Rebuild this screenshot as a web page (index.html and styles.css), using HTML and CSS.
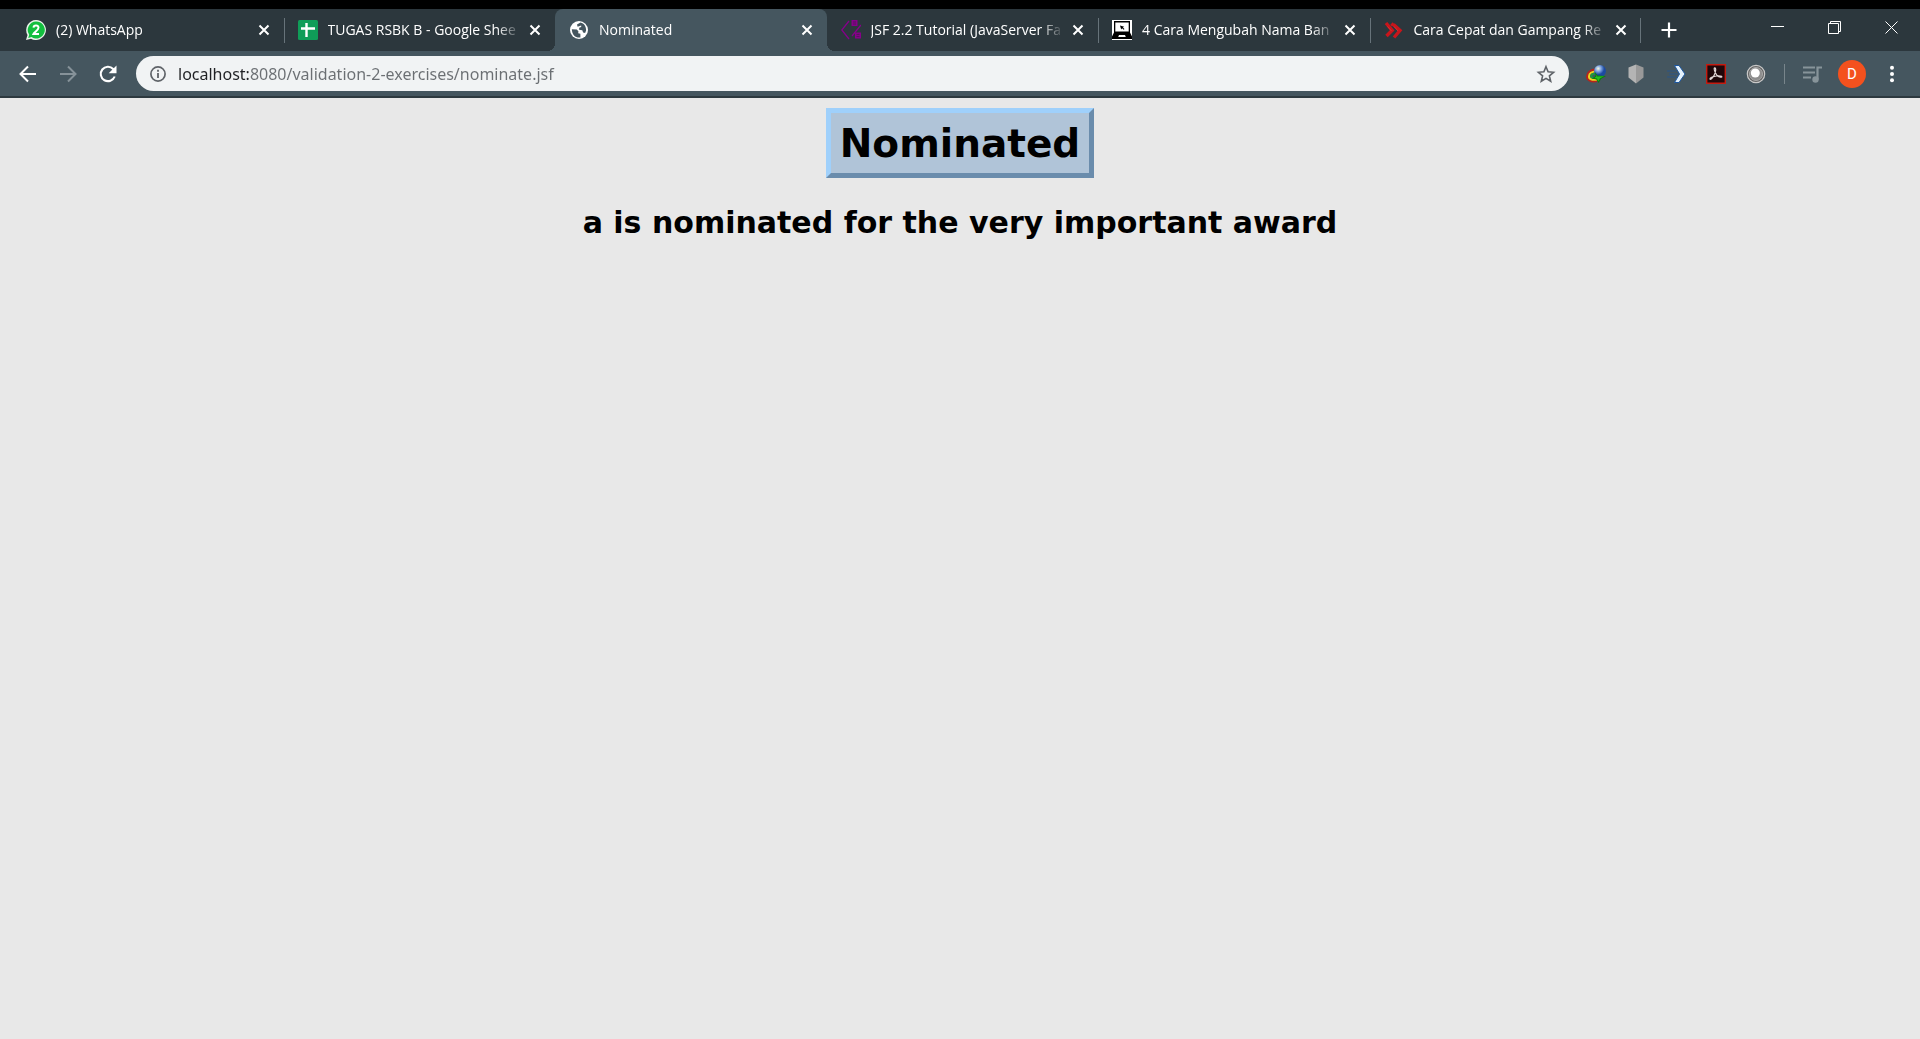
FILE: index.html
```html
<!DOCTYPE html>
<html lang="en">
<head>
<meta charset="utf-8">
<title>Nominated</title>
<link rel="stylesheet" href="styles.css">
</head>
<body>
<header class="browser">
  <div class="titlebar">
    <nav class="tabs" aria-label="Open tabs">
      <div class="tab">
        <svg class="favicon" viewBox="0 0 20 20"><path d="M10 0a10 10 0 1 1-5 18.700L0 20l1.500-5A10 10 0 0 1 10 0z" fill="#e9f3ea"/><path d="M10 1.500A8.500 8.500 0 1 1 5.500 17L2.200 18l1-3.200A8.500 8.500 0 0 1 10 1.500z" fill="#12bf3e"/><path d="M7.500 7.600c.2-3 5.200-2.900 5 .2C12.400 10 8.500 12 7.500 14H13" fill="none" stroke="#fff" stroke-width="2"/></svg>
        <a class="tab-title" href="#">(2) WhatsApp</a>
        <button class="tab-close" aria-label="Close tab"><svg viewBox="0 0 12 12"><path d="M1.500 1.500l9 9m0-9l-9 9"/></svg></button>
      </div>
      <div class="tab tab-divided">
        <svg class="favicon" viewBox="0 0 20 20"><rect width="20" height="20" rx="1.500" fill="#0f9d58"/><path d="M3 8.500h14M8.500 3v14" stroke="#fff" stroke-width="2.400"/></svg>
        <a class="tab-title" href="#">TUGAS RSBK B - Google Shee</a>
        <button class="tab-close" aria-label="Close tab"><svg viewBox="0 0 12 12"><path d="M1.500 1.500l9 9m0-9l-9 9"/></svg></button>
      </div>
      <div class="tab tab-active">
        <svg class="favicon" viewBox="0 0 20 20"><circle cx="10" cy="10" r="9" fill="#fff"/><path d="M2.800 9.200l5 .4 1.600 1.700-.2 2 2.200.5v3.700C7 18.300 3 15 2.800 9.200zM8 4.400l3.500-1.900c3.600.8 5.800 4 5.600 8l-1 2.500-2-.6-.8-2.200-3.200-.4.1-2 2-.8V5.500L8.600 6.800z" fill="#45565f"/></svg>
        <a class="tab-title" href="#">Nominated</a>
        <button class="tab-close" aria-label="Close tab"><svg viewBox="0 0 12 12"><path d="M1.500 1.500l9 9m0-9l-9 9"/></svg></button>
      </div>
      <div class="tab">
        <svg class="favicon" viewBox="0 0 20 20"><path d="M8 1L.8 10 8 19M20 5l-9 11" fill="none" stroke="#86008a" stroke-width="1.300"/><path d="M10.500 0h6v6h-6zM14 12.500h6v6h-6z" fill="#86008a"/><path d="M12 2h3m-3 2h3M15.500 14.500h3m-3 2h3" stroke="#4c1556" stroke-width=".8"/></svg>
        <a class="tab-title" href="#">JSF 2.2 Tutorial (JavaServer Fa</a>
        <button class="tab-close" aria-label="Close tab"><svg viewBox="0 0 12 12"><path d="M1.500 1.500l9 9m0-9l-9 9"/></svg></button>
      </div>
      <div class="tab tab-divided">
        <svg class="favicon" viewBox="0 0 20 20"><path d="M0 0h20v20H0z" fill="#fff"/><path d="M2 1h16v11.500l2 4V19H0v-2.500l2-4z"/><path d="M3.300 2.500h13.400v9H3.300z" fill="#fff"/><path d="M8 5.500l4.200 1.200-1.300.8 1.600 1.500-.8.800-1.600-1.500-.9 1.200z"/><path d="M7 15h6l.8 2H6.200z" fill="#fff"/></svg>
        <a class="tab-title" href="#">4 Cara Mengubah Nama Ban</a>
        <button class="tab-close" aria-label="Close tab"><svg viewBox="0 0 12 12"><path d="M1.500 1.500l9 9m0-9l-9 9"/></svg></button>
      </div>
      <div class="tab tab-divided tab-last">
        <svg class="favicon" viewBox="0 0 20 20"><path d="M2 3l6.200 7.300L2.500 16M7.500 3.500l1.700 1.800M9.500 4.500l6.500 6-6 7" fill="none" stroke="#c9151b" stroke-width="3.400"/><path d="M3.500 6.500l4 4.500M10 6.500l4 4.500" stroke="#e23a3a" stroke-width=".7"/></svg>
        <a class="tab-title" href="#">Cara Cepat dan Gampang Re</a>
        <button class="tab-close" aria-label="Close tab"><svg viewBox="0 0 12 12"><path d="M1.500 1.500l9 9m0-9l-9 9"/></svg></button>
      </div>
    </nav>
    <button class="new-tab" aria-label="New tab"><svg class="icon" viewBox="0 0 20 20"><path d="M10 2.500v15M2.500 10h15" stroke="#fff" stroke-width="2.200"/></svg></button>
    <div class="window-controls">
      <button class="window-button" aria-label="Minimize"><svg viewBox="0 0 14 14"><path d="M0 5.500h13"/></svg></button>
      <button class="window-button" aria-label="Restore"><svg viewBox="0 0 14 14"><path d="M.5 2.500h10v10H.5zM2.500 2.500v-2h10v10h-2"/></svg></button>
      <button class="window-button" aria-label="Close"><svg viewBox="0 0 14 14"><path d="M.5.500l12 12m0-12l-12 12"/></svg></button>
    </div>
  </div>
  <div class="toolbar">
    <button class="tool" aria-label="Back"><svg class="icon" viewBox="0 0 20 20"><path d="M18 10H3M10 2.500L2.500 10l7.500 7.500" fill="none" stroke="#fff" stroke-width="2"/></svg></button>
    <button class="tool" aria-label="Forward"><svg class="icon" viewBox="0 0 20 20"><path d="M2 10h15M10 2.500l7.500 7.500-7.500 7.500" fill="none" stroke="#869299" stroke-width="2"/></svg></button>
    <button class="tool" aria-label="Reload"><svg class="icon" viewBox="0 0 20 20"><path d="M16.700 12.500A7.200 7.200 0 1 1 15.200 5l1.300 1.500" fill="none" stroke="#fff" stroke-width="2.100"/><path d="M18.500 1.500v7.800h-7.800z" fill="#fff"/></svg></button>
    <form class="omnibox">
      <svg class="info" viewBox="0 0 16 16"><circle cx="8" cy="8" r="7.100" fill="none" stroke="#5f6368" stroke-width="1.700"/><path d="M8 3.800v1.900M8 7v5" stroke="#5f6368" stroke-width="1.800"/></svg>
      <input class="address" type="text" aria-label="Address" value="localhost:8080/validation-2-exercises/nominate.jsf">
      <button class="bookmark" type="button" aria-label="Bookmark this page"><svg class="icon" viewBox="0 0 20 20"><path d="M10 2.700l2.100 5.100 5.500.5-4.200 3.600 1.300 5.400L10 14.400l-4.700 2.900 1.300-5.400-4.200-3.600 5.500-.5z" fill="none" stroke="#5f6368" stroke-width="1.600"/></svg></button>
    </form>
    <button class="tool" aria-label="Download manager"><svg class="icon" viewBox="0 0 20 20">
      <defs><radialGradient id="globe" cx=".35" cy=".3"><stop offset="0" stop-color="#f6f7dc"/><stop offset=".45" stop-color="#86a9e0"/><stop offset="1" stop-color="#1c4aa0"/></radialGradient></defs>
      <g fill="none" stroke-width="2"><path d="M11 17C5 18.500 1 16 1 12.500 1 8.500 5 5.500 9.500 5.500" stroke="#b8241a"/><path d="M11 15.500c-5 1-8.200-.5-8-3.300C3.200 9.500 6 7.500 9.500 7.500" stroke="#f2d31c"/><path d="M11 13.800c-4 .8-6 0-5.800-1.800.3-1.500 2.300-2.500 4.800-2.500" stroke="#1d9a3e"/></g>
      <circle cx="14" cy="7" r="6" fill="url(#globe)"/><path d="M9 8l2.500 3.500 8.500.5-5 3-2.500 4-2.200-3.500-4.300-1 3.500-2.500z" fill="#0d7a10"/><path d="M9.500 9.500l1.500 3 7-.2-4 2-1.700 2.900-1.300-2.700-2.500-.6 1.800-1.400z" fill="#22c01c"/></svg></button>
    <button class="tool" aria-label="Shield"><svg class="icon" viewBox="0 0 20 20"><path d="M10 .5l7.500 3v10L10 19.500z" fill="#999"/><path d="M10 .5l-7.500 3v10l7.500 6z" fill="#b4b4b4"/></svg></button>
    <button class="tool" aria-label="Arrow extension"><svg class="icon" viewBox="0 0 20 20"><path d="M1 7h9M3 10h9M1 13h9" stroke="#2b5488"/><path d="M8.500 1.500h4.500l6 8.500-6 8.500H8.500l5-8.500z" fill="#e4f2fd" stroke="#1d57a0"/></svg></button>
    <button class="tool" aria-label="PDF"><svg class="icon" viewBox="0 0 20 20"><path d="M.7.700h18.600v18.600H.7z" fill="#20070a" stroke="#c51b10" stroke-width="1.400"/><path d="M8.600 3.800c2-.2.9 5.300-.6 7.700-1.700 3-3.800 4.700-4 3.500-.3-2 8-4.200 11.600-2.700 1.400 1.500-3 1.300-5-1.400C8.700 8 7.500 4 8.600 3.800z" fill="none" stroke="#e3d5d5" stroke-width="1.200"/></svg></button>
    <button class="tool" aria-label="Ball extension"><svg class="icon" viewBox="0 0 20 20"><circle cx="10" cy="10" r="8.700" fill="#666" stroke="#c9c9c9" stroke-width="1.200"/><circle cx="10" cy="10" r="6.500" fill="#8d8d8d" stroke="#a8a8a8"/><circle cx="9.300" cy="9" r="4.500" fill="#fff"/></svg></button>
    <span class="tool-divider"></span>
    <button class="tool" aria-label="Media"><svg class="icon" viewBox="0 0 20 20"><path d="M1 3.500h12M1 8.500h12M1 13.500h8" stroke="#87949a" stroke-width="2"/><path d="M20 3.500h-4.500v12" fill="none" stroke="#87949a" stroke-width="2.200"/><circle cx="13.500" cy="15.500" r="3.200" fill="#87949a"/></svg></button>
    <button class="tool" aria-label="Profile"><span class="avatar">D</span></button>
    <button class="tool" aria-label="Menu"><svg class="icon" viewBox="0 0 20 20" fill="#fff"><circle cx="10" cy="3.800" r="2"/><circle cx="10" cy="10" r="2"/><circle cx="10" cy="16.200" r="2"/></svg></button>
  </div>
</header>
<main class="page">
  <h1 class="page-title">Nominated</h1>
  <h2 class="message">a is nominated for the very important award</h2>
</main>
</body>
</html>
```

FILE: styles.css
```css
* {
  box-sizing: border-box;
}

body {
  margin: 0;
  min-height: 100vh;
  background: #e8e8e8;
}

button {
  display: flex;
  align-items: center;
  justify-content: center;
  padding: 0;
  border: 0;
  background: none;
}

.browser {
  border-top: 9px solid #000;
  border-bottom: 2px solid #2d393f;
  background: #45565f;
  font-family: "Open Sans", "Noto Sans", sans-serif;
}

.titlebar {
  display: flex;
  height: 42px;
  padding-left: 12px;
  background: #2c373d;
}

.tabs {
  display: flex;
  flex: 0 1 1629px;
  min-width: 0;
}

.tab {
  position: relative;
  display: flex;
  flex: 1;
  align-items: center;
  min-width: 0;
  padding: 0 14px;
}

.tab-divided::before,
.tab-last::after {
  content: "";
  position: absolute;
  top: 9px;
  left: 0;
  width: 1px;
  height: 25px;
  background: #67737a;
}

.tab-last::after {
  right: 0;
  left: auto;
}

.tab-active {
  border-radius: 8px 8px 0 0;
  background: #45565f;
}

.tab-active::before,
.tab-active::after {
  content: "";
  position: absolute;
  bottom: 0;
  width: 8px;
  height: 8px;
}

.tab-active::before {
  right: 100%;
  background: radial-gradient(circle at 0 0, #2c373d 8px, #45565f 8px);
}

.tab-active::after {
  left: 100%;
  background: radial-gradient(circle at 100% 0, #2c373d 8px, #45565f 8px);
}

.favicon,
.icon {
  display: block;
  flex: none;
  width: 20px;
  height: 20px;
}

.tab-title {
  flex: 1;
  min-width: 0;
  margin: 0 8px 0 10px;
  overflow: hidden;
  color: #fff;
  font-size: 14px;
  line-height: 20px;
  text-decoration: none;
  white-space: nowrap;
  -webkit-mask-image: linear-gradient(to left, transparent, #000 24px);
  mask-image: linear-gradient(to left, transparent, #000 24px);
}

.tab-close svg {
  width: 12px;
  height: 12px;
  fill: none;
  stroke: #fff;
  stroke-width: 2;
}

.new-tab {
  width: 56px;
}

.window-controls {
  display: flex;
  margin-left: auto;
}

.window-button {
  width: 57px;
  height: 37px;
}

.window-button svg {
  width: 14px;
  height: 14px;
  fill: none;
  stroke: #fff;
}

.toolbar {
  display: flex;
  align-items: center;
  height: 45px;
  padding: 0 8px;
}

.tool {
  flex: none;
  width: 40px;
  height: 40px;
}

.omnibox {
  display: flex;
  flex: 1;
  align-items: center;
  height: 35px;
  margin: 0 7px 0 8px;
  padding: 0 13px 0 14px;
  border-radius: 18px;
  background: #f1f3f4;
}

.info {
  flex: none;
  width: 16px;
  height: 16px;
}

.address {
  flex: 1;
  min-width: 0;
  margin-left: 12px;
  padding: 0;
  border: 0;
  outline: 0;
  background: linear-gradient(to right, #202124 73px, #6b6f73 73px);
  -webkit-background-clip: text;
  background-clip: text;
  color: transparent;
  font-family: "Noto Sans", sans-serif;
  font-size: 16px;
  line-height: 24px;
}

.tool-divider {
  width: 1px;
  height: 20px;
  margin: 0 7px 0 8px;
  background: #78858b;
}

.avatar {
  width: 28px;
  border-radius: 50%;
  background: #f4511e;
  color: #fff;
  font-family: Roboto, sans-serif;
  font-size: 15px;
  line-height: 28px;
  text-align: center;
}

.page {
  display: flex;
  flex-direction: column;
  align-items: center;
  padding: 10px;
  color: #000;
  font-family: Verdana, "DejaVu Sans", sans-serif;
}

.page-title {
  margin: 0;
  padding: 6px 9px 4px;
  border: 5px solid;
  border-color: #9fd0fb #6a8cac #6a8cac #9fd0fb;
  background: #b0c4d8;
  font-size: 39px;
  line-height: 50px;
}

.message {
  margin: 27px 0 0;
  font-size: 30px;
  line-height: 36px;
  text-align: center;
}
```
